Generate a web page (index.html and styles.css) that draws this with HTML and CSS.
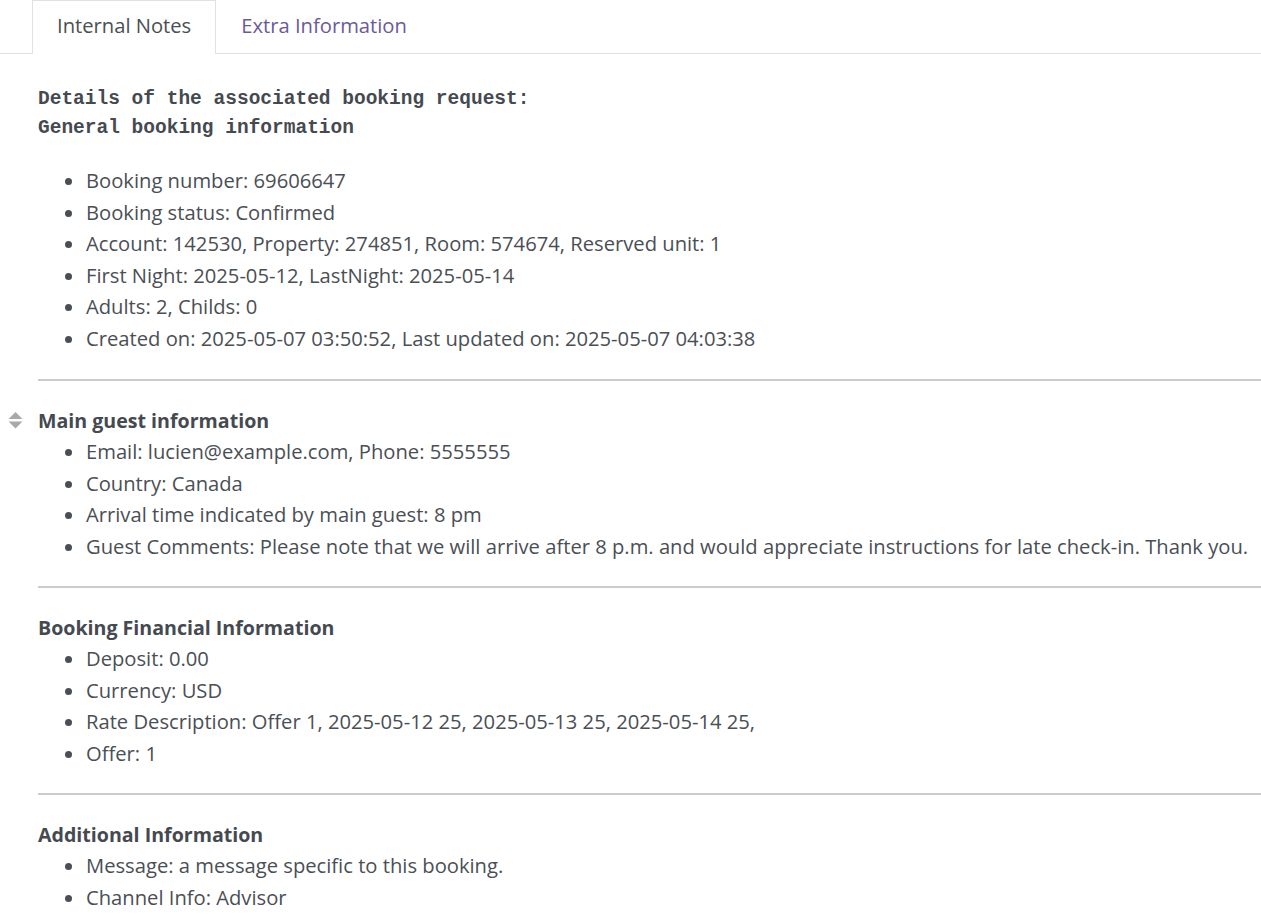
FILE: index.html
```html
<!DOCTYPE html>
<html>
<head>
<meta charset="utf-8">
<link rel="stylesheet" href="styles.css">
</head>
<body>
<div class="tabs">
  <div class="tab-spacer"></div>
  <div class="tab active">Internal Notes</div>
  <div class="tab">Extra Information</div>
  <div class="tab-fill"></div>
</div>
<div class="content">
  <div class="mono">Details of the associated booking request:<br>General booking information</div>
  <ul class="list first">
    <li>Booking number: 69606647</li>
    <li>Booking status: Confirmed</li>
    <li>Account: 142530, Property: 274851, Room: 574674, Reserved unit: 1</li>
    <li>First Night: 2025-05-12, LastNight: 2025-05-14</li>
    <li>Adults: 2, Childs: 0</li>
    <li>Created on: 2025-05-07 03:50:52, Last updated on: 2025-05-07 04:03:38</li>
  </ul>
  <hr class="sep">
  <div class="section">
    <span class="sort-icon"><svg width="15" height="19" viewBox="0 0 15 19"><path d="M7.5 1 L14.5 8 H0.5 Z" fill="#a9a9a9"/><path d="M0.5 10.5 H14.5 L7.5 17.5 Z" fill="#a9a9a9"/></svg></span>
    <div class="heading">Main guest information</div>
    <ul class="list">
      <li>Email: lucien@example.com, Phone: 5555555</li>
      <li>Country: Canada</li>
      <li>Arrival time indicated by main guest: 8 pm</li>
      <li>Guest Comments: Please note that we will arrive after 8 p.m. and would appreciate instructions for late check-in. Thank you.</li>
    </ul>
  </div>
  <hr class="sep">
  <div class="section">
    <div class="heading">Booking Financial Information</div>
    <ul class="list">
      <li>Deposit: 0.00</li>
      <li>Currency: USD</li>
      <li>Rate Description: Offer 1, 2025-05-12 25, 2025-05-13 25, 2025-05-14 25,</li>
      <li>Offer: 1</li>
    </ul>
  </div>
  <hr class="sep">
  <div class="section">
    <div class="heading">Additional Information</div>
    <ul class="list">
      <li>Message: a message specific to this booking.</li>
      <li>Channel Info: Advisor</li>
    </ul>
  </div>
</div>
</body>
</html>
```
FILE: styles.css
```css
html, body {
  margin: 0;
  padding: 0;
  background: #fff;
}
body {
  font-family: "Open Sans", "Noto Sans", sans-serif;
  color: #4a4f55;
  overflow: hidden;
}
.tabs {
  display: flex;
  height: 54px;
  box-sizing: border-box;
  border-bottom: 1px solid #dee2e6;
}
.tab-spacer {
  width: 32px;
}
.tab {
  padding: 0 24px 6px 24px;
  display: flex;
  align-items: center;
  font-size: 20.2px;
  color: #6a5a9b;
  border: 1px solid transparent;
  border-bottom: none;
  margin-bottom: -1px;
  height: 54px;
  box-sizing: border-box;
}
.tab.active {
  color: #4a4f55;
  background: #fff;
  border-color: #dee2e6;
}
.tab-fill {
  flex: 1;
}
.content {
  padding: 31px 0 0 38px;
}
.mono {
  font-family: "Liberation Mono", monospace;
  font-weight: bold;
  font-size: 19.5px;
  line-height: 29px;
  color: #454a50;
}
.list {
  margin: 0;
  padding-left: 48px;
  font-size: 20.2px;
  line-height: 31.6px;
}
.list.first {
  margin-top: 22px;
  margin-bottom: 24px;
}
.sep {
  border: none;
  height: 2px;
  background: #cccccc;
  margin: 23px 0 24px 0;
}
.section {
  position: relative;
}
.heading {
  font-weight: bold;
  font-size: 19.6px;
  line-height: 31.6px;
  color: #454a50;
}
.sort-icon {
  position: absolute;
  left: -30px;
  top: 6px;
  display: flex;
}
```
